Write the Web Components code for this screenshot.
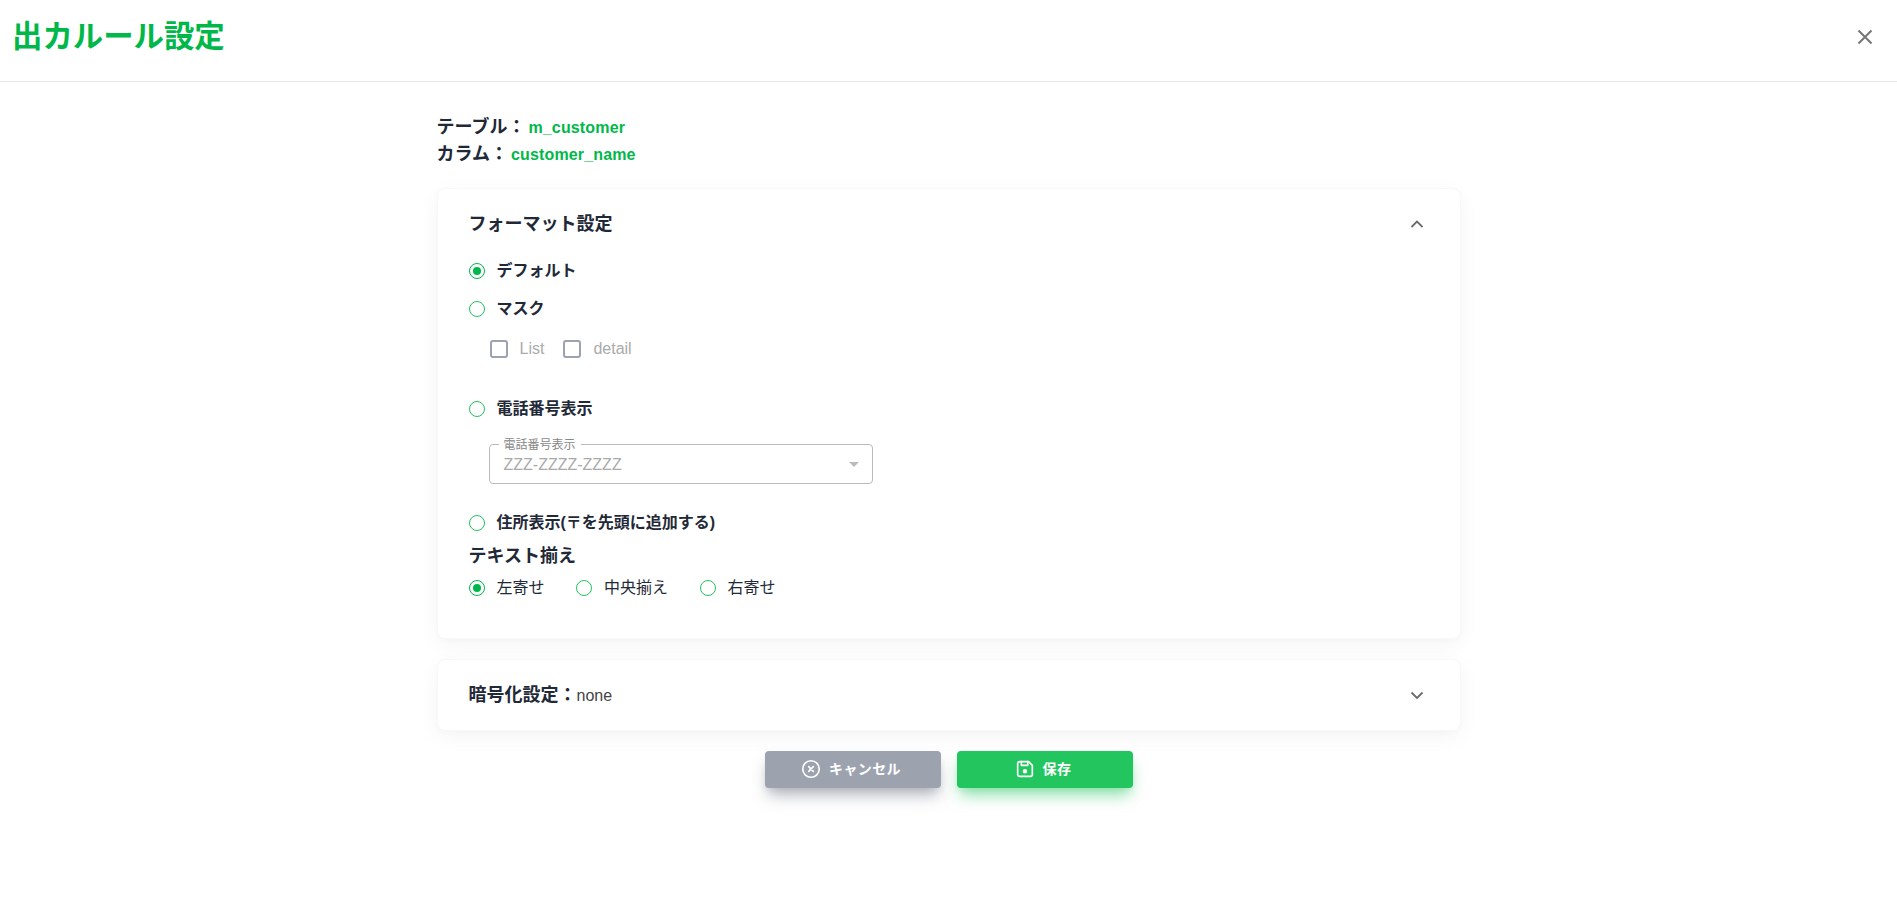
<!DOCTYPE html>
<html lang="ja"><head><meta charset="utf-8"><title>出力ルール設定</title>
<style>
html,body{margin:0;padding:0;background:#fff;}
body{font-family:"Liberation Sans","Noto Sans CJK JP",sans-serif;color:#1f2937;}
</style></head><body>
<rule-page></rule-page>
<template id="t-page">
<style>
:host{display:block;height:917px;overflow:hidden;--green:#00b84a;}
.wrap{width:1024px;margin:0 auto;display:flex;flex-direction:column;}
.info{padding-top:32px;height:74px;font-size:18px;line-height:27px;font-weight:700;color:#1f2937;}
.info div{height:27px;display:flex;align-items:center;}
.info b{font-size:16px;color:var(--green);font-weight:700;margin-left:3px;letter-spacing:.15px;}
.f{display:flex;flex-direction:column;}
.h3{font-size:18px;line-height:27px;font-weight:700;color:#1f2937;height:27px;margin-top:8px;}
.row{display:flex;gap:31.5px;margin-top:6px;}
.none{font-size:16px;font-weight:400;color:#444;}
.btns{display:flex;justify-content:center;gap:16px;margin-top:20px;}
.checks{display:flex;gap:19px;padding-left:21px;height:22px;margin-top:17px;margin-bottom:37px;}
</style>
<app-header>出カルール設定</app-header>
<div class="wrap">
 <div class="info"><div>テーブル： <b>m_customer</b></div><div>カラム： <b>customer_name</b></div></div>
 <app-card open style="height:451px">
  <span slot="title">フォーマット設定</span>
  <div class="f">
   <app-radio checked strong>デフォルト</app-radio>
   <app-radio strong style="margin-top:14px">マスク</app-radio>
   <div class="checks"><app-check>List</app-check><app-check>detail</app-check></div>
   <app-radio strong>電話番号表示</app-radio>
   <app-select style="margin-top:23px" label="電話番号表示" value="ZZZ-ZZZZ-ZZZZ"></app-select>
   <app-radio strong style="margin-top:27px">住所表示(〒を先頭に追加する)</app-radio>
   <div class="h3">テキスト揃え</div>
   <div class="row"><app-radio checked>左寄せ</app-radio><app-radio>中央揃え</app-radio><app-radio>右寄せ</app-radio></div>
  </div>
 </app-card>
 <app-card style="height:72px;margin-top:20px">
  <span slot="title">暗号化設定：<span class="none">none</span></span>
 </app-card>
 <div class="btns">
  <app-button kind="cancel">キャンセル</app-button>
  <app-button kind="save">保存</app-button>
 </div>
</div>
</template>
<script>
function def(name, html){
  customElements.define(name, class extends HTMLElement{
    constructor(){super();const s=this.attachShadow({mode:"open"});s.innerHTML=typeof html==="function"?html(this):html;}
  });
}
customElements.define("rule-page", class extends HTMLElement{
  constructor(){super();this.attachShadow({mode:"open"}).appendChild(document.getElementById("t-page").content.cloneNode(true));}
});
def("app-header",`<style>
:host{display:flex;align-items:center;justify-content:space-between;height:81px;border-bottom:1px solid #e5e7eb;padding:0 20px 0 12px;}
h1{margin:0 0 10px;font-size:30.4px;line-height:36px;font-weight:700;color:#00b84a;}
svg{display:block;margin-bottom:8px;}
</style><h1><slot></slot></h1>
<svg width="24" height="24" viewBox="0 0 24 24" fill="none" stroke="#757575" stroke-width="2"><path d="M5.5 5.5l13 13M18.5 5.5l-13 13"/></svg>`);
const chevUp='M4.5 13l5.5-5.5 5.5 5.5', chevDown='M4.5 7.5l5.5 5.5 5.5-5.5';
def("app-card",(h)=>`<style>
:host{display:block;box-sizing:border-box;background:#fff;border-radius:8px;border:1px solid #f8f8f9;box-shadow:0 6px 22px rgba(17,24,39,.045),0 2px 6px rgba(17,24,39,.015);}
.head{display:flex;align-items:center;justify-content:space-between;height:66px;padding:0 33px 0 31px;box-sizing:border-box;font-size:18px;font-weight:700;color:#1f2937;}
.body{padding:0 31px;margin-top:4px;}
svg{display:block;margin-top:3px;}
</style><div class="head"><div><slot name="title"></slot></div>
<svg width="20" height="20" viewBox="0 0 20 20" fill="none" stroke="#6b6b6b" stroke-width="1.8"><path d="${h.hasAttribute("open")?chevUp:chevDown}"/></svg></div>
${h.hasAttribute("open")?'<div class="body"><slot></slot></div>':''}`);
def("app-radio",(h)=>`<style>
:host{display:flex;align-items:center;height:24px;font-size:16px;line-height:24px;color:#1f2937;font-weight:${h.hasAttribute("strong")?700:400};}
.r{width:16px;height:16px;border-radius:50%;box-sizing:border-box;border:1.6px solid ${h.hasAttribute("checked")?"#00b84a":"#22c55e"};display:flex;align-items:center;justify-content:center;margin-right:12px;flex:none;}
i{width:8px;height:8px;border-radius:50%;background:#00b84a;display:block;}
</style><span class="r">${h.hasAttribute("checked")?"<i></i>":""}</span><span><slot></slot></span>`);
def("app-check",`<style>
:host{display:flex;align-items:center;height:22px;font-size:16px;color:#aaa;}
.c{width:18px;height:18px;box-sizing:border-box;border:2px solid #9ca3af;border-radius:3px;margin-right:12px;flex:none;}
</style><span class="c"></span><slot></slot>`);
def("app-select",(h)=>`<style>
:host{display:block;box-sizing:border-box;margin-left:20px;width:384px;height:40px;border:1px solid #bbb;border-radius:4px;position:relative;font-size:16px;color:#aaa;}
.l{position:absolute;left:9px;top:-8px;background:#fff;padding:0 5px;font-size:12px;line-height:16px;color:#888;}
.v{display:flex;align-items:center;height:37px;padding:1px 0 0 14px;}
.a{position:absolute;right:13px;top:17px;width:0;height:0;border:5px solid transparent;border-top-color:#bbb;border-bottom:0;}
</style><span class="l">${h.getAttribute("label")}</span><div class="v">${h.getAttribute("value")}</div><span class="a"></span>`);
const icons={
 cancel:'<circle cx="12" cy="12" r="9"/><path d="M9.5 9.5l5 5m0-5l-5 5"/>',
 save:'<path d="M6 4h10l4 4v10a2 2 0 0 1-2 2H6a2 2 0 0 1-2-2V6a2 2 0 0 1 2-2z"/><path d="M8 4v4h7V4" /><circle cx="12" cy="14.5" r="1.6" fill="#fff"/>'
};
def("app-button",(h)=>{const k=h.getAttribute("kind");const c=k==="cancel"?"#9ca3af":"#22c55e";const sh=k==="cancel"?"rgba(107,114,128,.5)":"rgba(34,197,94,.5)";
return `<style>
:host{display:flex;align-items:center;justify-content:center;gap:7px;width:176px;height:37px;box-sizing:border-box;padding:0 4px 3px 0;border-radius:4px;background:${c};color:#fff;font-size:14px;font-weight:700;letter-spacing:.4px;box-shadow:0 10px 15px -3px ${sh},0 4px 6px -2px ${sh.replace(".5",".15")};}
svg{display:block;margin-top:1px;}
</style><svg width="22" height="22" viewBox="0 0 24 24" fill="none" stroke="#fff" stroke-width="1.8" stroke-linecap="round" stroke-linejoin="round">${icons[k]}</svg><span><slot></slot></span>`});
</script>
</body></html>
